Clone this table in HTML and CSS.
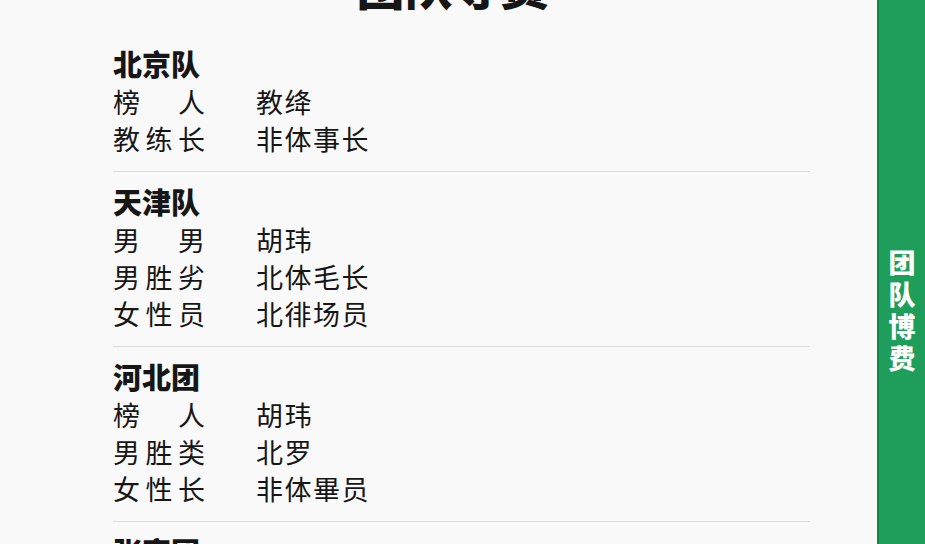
FILE: index.html
```html
<!DOCTYPE html>
<html lang="zh-CN">
<head>
    <meta charset="UTF-8">
    <meta name="viewport" content="width=device-width, initial-scale=1.0">
    <title>团队导费</title>
    <link rel="stylesheet" href="styles.css">
</head>
<body>
    <main class="page">
        <div class="content">
            <h1 class="title">团队导费</h1>

            <section class="team">
                <h2 class="team-name">北京队</h2>
                <div class="row"><span class="label">榜人</span><span class="value">教绛</span></div>
                <div class="row"><span class="label">教练长</span><span class="value">非体事长</span></div>
            </section>

            <section class="team">
                <h2 class="team-name">天津队</h2>
                <div class="row"><span class="label">男男</span><span class="value">胡玮</span></div>
                <div class="row"><span class="label">男胜劣</span><span class="value">北体毛长</span></div>
                <div class="row"><span class="label">女性员</span><span class="value">北徘场员</span></div>
            </section>

            <section class="team">
                <h2 class="team-name">河北团</h2>
                <div class="row"><span class="label">榜人</span><span class="value">胡玮</span></div>
                <div class="row"><span class="label">男胜类</span><span class="value">北罗</span></div>
                <div class="row"><span class="label">女性长</span><span class="value">非体畢员</span></div>
            </section>

            <section class="team">
                <h2 class="team-name">张家团</h2>
            </section>
        </div>
    </main>
    <aside class="side-tab">
        <span class="side-text">团队博费</span>
    </aside>
</body>
</html>
```

FILE: styles.css
```css
:root {
    --green: #1f9d5a;
    --green-dark: #17854a;
    --ink: #161616;
    --line: #dcdcdc;
    --paper: #f9f9f9;
}
html, body {
    height: 100%;
}
body {
    margin: 0;
    background: var(--paper);
    font-family: "Noto Sans CJK SC", "Noto Sans", sans-serif;
    color: var(--ink);
    display: flex;
    overflow: hidden;
}
.page {
    flex: 1;
    padding-left: 113px;
}
.content {
    width: 697px;
}
.title {
    font-size: 48px;
    line-height: 56px;
    font-weight: 900;
    margin: -44px 0 22px;
    padding-right: 18px;
    text-align: center;
}
.team {
    padding: 9px 0 14px;
    border-bottom: 1px solid var(--line);
}
.team-name {
    margin: 0;
    font-size: 29px;
    line-height: 40px;
    font-weight: 900;
}
.row {
    display: flex;
    font-size: 27px;
    line-height: 37px;
}
.label {
    width: 92px;
    text-align: justify;
    text-align-last: justify;
    margin-right: 51px;
}
.value {
    letter-spacing: 1.5px;
}
.side-tab {
    width: 46px;
    background: var(--green);
    border-left: 2px solid var(--green-dark);
    display: flex;
    justify-content: center;
    align-items: center;
    padding-top: 82px;
}
.side-text {
    writing-mode: vertical-rl;
    color: #fff;
    font-size: 27px;
    font-weight: 900;
    letter-spacing: 5px;
}
```
